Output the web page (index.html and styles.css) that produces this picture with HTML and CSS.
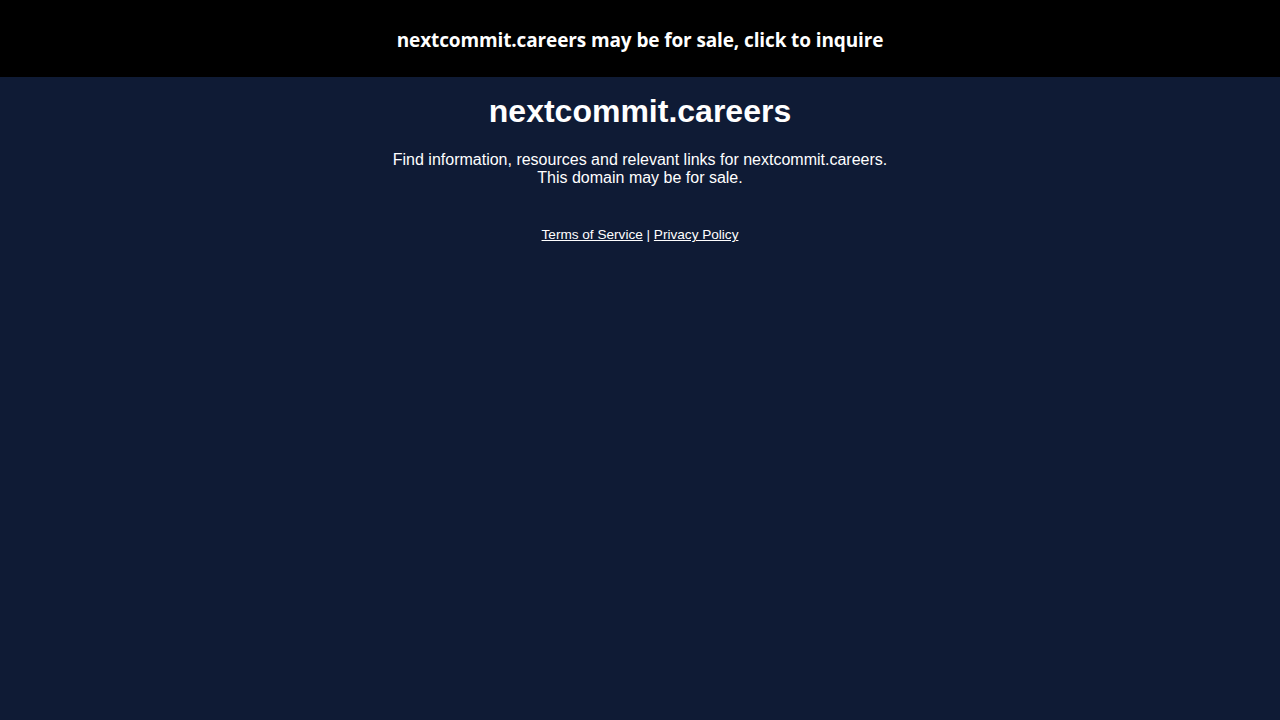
FILE: index.html
```html
<!DOCTYPE html>
<html>
<head>
<meta charset="utf-8">
<link rel="stylesheet" href="styles.css">
</head>
<body>
<div class="banner"><a class="banner-link" href="#">nextcommit.careers may be for sale, click to inquire</a></div>
<main class="content">
<h1 class="title">nextcommit.careers</h1>
<p class="desc">Find information, resources and relevant links for nextcommit.careers.<br>This domain may be for sale.</p>
<p class="legal"><a href="#">Terms of Service</a> | <a href="#">Privacy Policy</a></p>
</main>
</body>
</html>
```
FILE: styles.css
```css
html, body { margin: 0; padding: 0; }
body { background: #0f1b35; color: #fff; font-family: "Liberation Sans", Arial, sans-serif; height: 720px; }
.banner { background: #000; height: 77px; display: flex; align-items: center; justify-content: center; padding-top: 2px; box-sizing: border-box; }
.banner-link { color: #fff; text-decoration: none; font-family: "Open Sans", "Noto Sans", sans-serif; font-weight: 700; font-size: 19px; letter-spacing: -0.12px; }
.content { text-align: center; }
.title { margin: 16px 0 0; font-size: 32px; line-height: 37px; font-weight: 700; }
.desc { margin: 21px 0 0; font-size: 16px; line-height: 18px; }
.legal { margin: 40px 0 0; font-size: 13.6px; line-height: 16px; }
.legal a { color: #fff; }
```
